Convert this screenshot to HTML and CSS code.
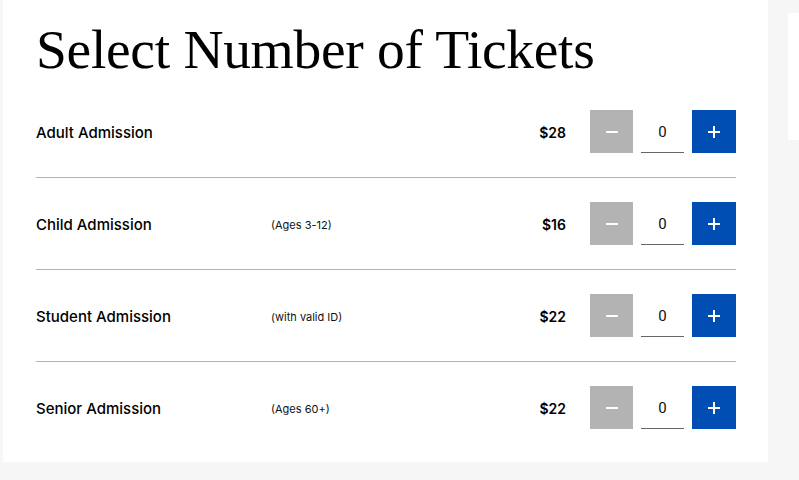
FILE: index.html
```html
<!DOCTYPE html>
<html>
<head>
<meta charset="utf-8">
<link rel="stylesheet" href="styles.css">
</head>
<body>
<div class="page">
  <main class="panel">
    <h1 class="title">Select Number of Tickets</h1>
    <div class="rows">
      <div class="row">
        <div class="label">Adult Admission</div>
        <div class="desc"></div>
        <div class="price">$28</div>
        <div class="stepper">
          <button class="btn minus" aria-label="decrease"><span class="bar"></span></button>
          <div class="qty">0</div>
          <button class="btn plus" aria-label="increase"><span class="bar"></span><span class="bar v"></span></button>
        </div>
      </div>
      <div class="row">
        <div class="label">Child Admission</div>
        <div class="desc">(Ages 3-12)</div>
        <div class="price">$16</div>
        <div class="stepper">
          <button class="btn minus" aria-label="decrease"><span class="bar"></span></button>
          <div class="qty">0</div>
          <button class="btn plus" aria-label="increase"><span class="bar"></span><span class="bar v"></span></button>
        </div>
      </div>
      <div class="row">
        <div class="label">Student Admission</div>
        <div class="desc">(with valid ID)</div>
        <div class="price">$22</div>
        <div class="stepper">
          <button class="btn minus" aria-label="decrease"><span class="bar"></span></button>
          <div class="qty">0</div>
          <button class="btn plus" aria-label="increase"><span class="bar"></span><span class="bar v"></span></button>
        </div>
      </div>
      <div class="row">
        <div class="label">Senior Admission</div>
        <div class="desc">(Ages 60+)</div>
        <div class="price">$22</div>
        <div class="stepper">
          <button class="btn minus" aria-label="decrease"><span class="bar"></span></button>
          <div class="qty">0</div>
          <button class="btn plus" aria-label="increase"><span class="bar"></span><span class="bar v"></span></button>
        </div>
      </div>
    </div>
  </main>
  <aside class="side"></aside>
</div>
</body>
</html>
```
FILE: styles.css
```css
html, body {
  margin: 0;
  padding: 0;
  background: #f6f6f6;
}
.page {
  display: flex;
  align-items: flex-start;
  padding-left: 3px;
  height: 480px;
  overflow: hidden;
}
.panel {
  background: #ffffff;
  width: 765px;
  box-sizing: border-box;
  padding: 0 32px 0 33px;
  height: 462px;
  flex-shrink: 0;
}
.side {
  background: #ffffff;
  width: 40px;
  height: 127px;
  margin-top: 13px;
  margin-left: 20px;
  flex-shrink: 0;
}
.title {
  margin: 0;
  padding-top: 18px;
  height: 86px;
  box-sizing: border-box;
  font-family: "Liberation Serif", "Times New Roman", serif;
  font-weight: 400;
  font-size: 55.5px;
  line-height: 64px;
  color: #000;
  letter-spacing: -0.3px;
}
.rows {
  display: flex;
  flex-direction: column;
}
.row {
  display: flex;
  align-items: center;
  padding: 24px 0;
  border-bottom: 1px solid #b3b3b3;
}
.row:last-child {
  border-bottom: none;
}
.label {
  width: 235px;
  font-family: "Inter", "Noto Sans", sans-serif;
  font-weight: 500;
  font-size: 15px;
  color: #000;
  padding-top: 1px;
}
.desc {
  flex: 1;
  font-family: "Inter", "Noto Sans", sans-serif;
  font-size: 11px;
  color: #111;
  padding-top: 2px;
}
.price {
  font-family: "Inter", "Noto Sans", sans-serif;
  font-weight: 600;
  font-size: 14px;
  color: #000;
  margin-right: 24px;
  padding-top: 1px;
}
.stepper {
  display: flex;
  gap: 8px;
  align-items: stretch;
}
.btn {
  width: 43px;
  height: 43px;
  border: none;
  padding: 0;
  margin: 0;
  position: relative;
  cursor: pointer;
}
.btn.minus {
  background: #b3b3b3;
}
.btn.plus {
  background: #004db3;
  width: 44px;
}
.bar {
  position: absolute;
  left: 50%;
  top: 50%;
  width: 12px;
  height: 2px;
  margin-left: -6px;
  margin-top: -1px;
  background: #ffffff;
}
.bar.v {
  width: 2px;
  height: 12px;
  margin-left: -1px;
  margin-top: -6px;
}
.qty {
  width: 43px;
  height: 43px;
  box-sizing: border-box;
  border-bottom: 1px solid #666;
  display: flex;
  align-items: center;
  justify-content: center;
  font-family: "Roboto", "Liberation Sans", sans-serif;
  font-size: 15px;
  color: #111;
  padding-top: 1px;
}
```
